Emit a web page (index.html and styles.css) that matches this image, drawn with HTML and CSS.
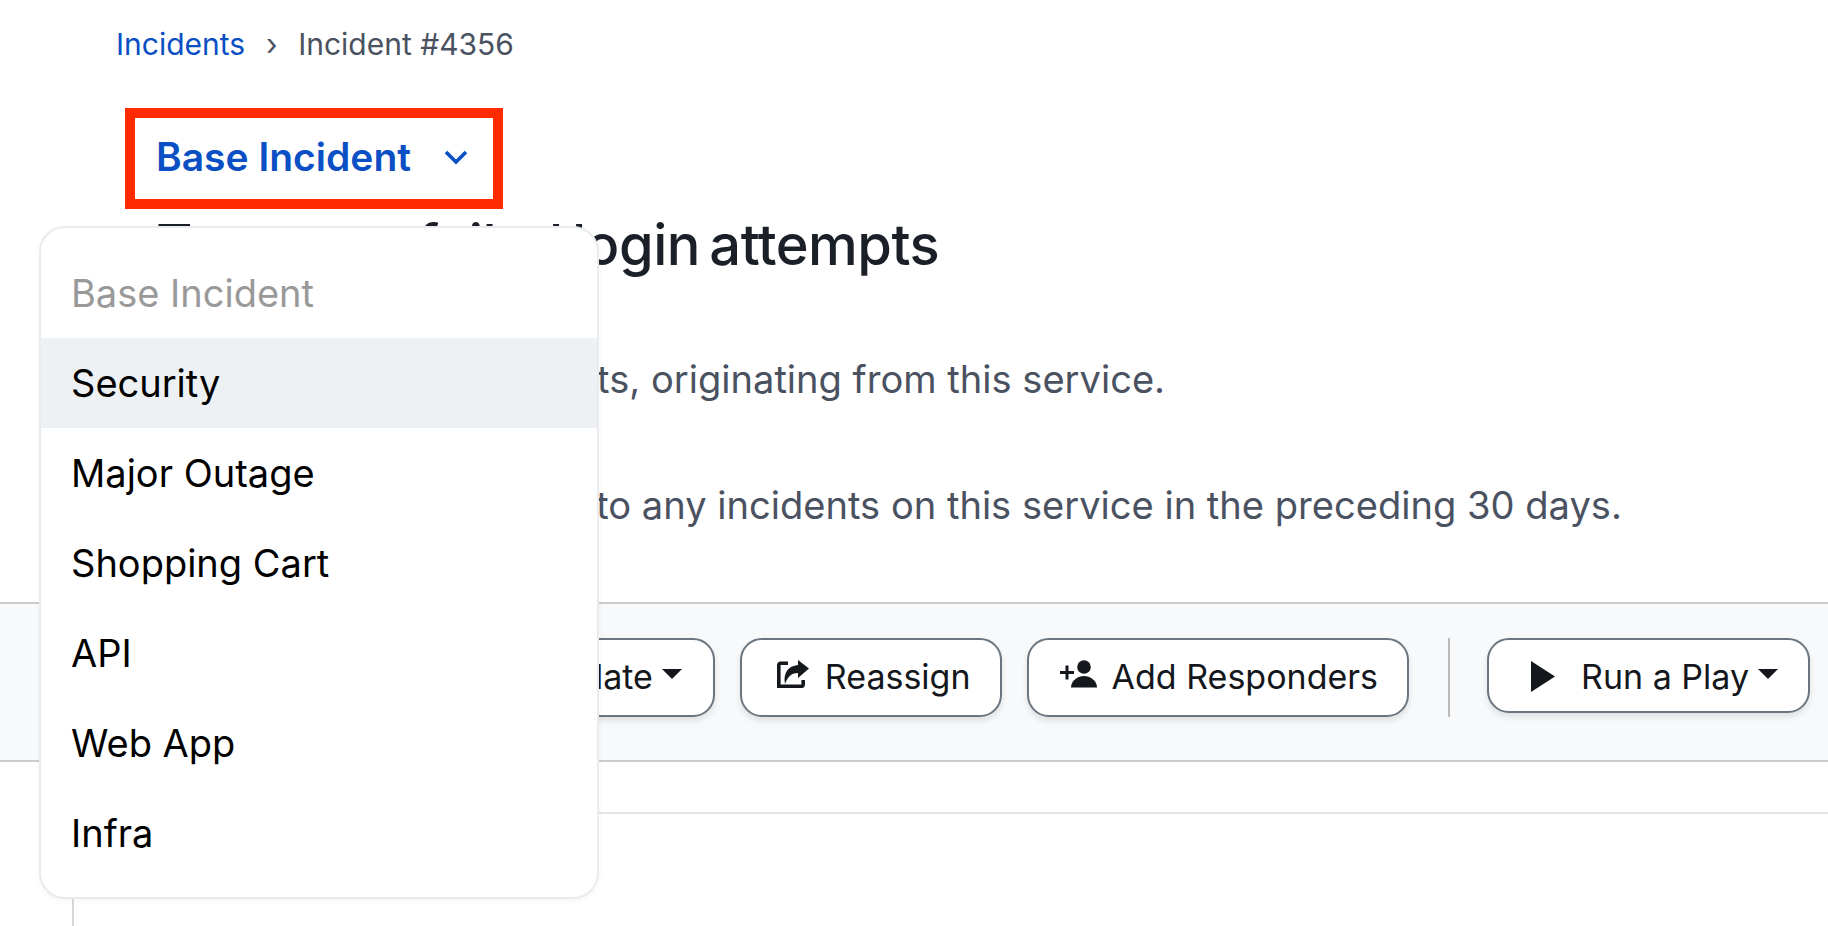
FILE: index.html
```html
<!DOCTYPE html>
<html lang="en">
<head>
    <meta charset="UTF-8">
    <title>Incident #4356</title>
    <link rel="stylesheet" href="styles.css">
</head>
<body>
<nav class="crumbs">
    <a href="#" class="crumb-link">Incidents</a>
    <span class="crumb-sep">›</span>
    <span>Incident #4356</span>
</nav>
<div class="type-box">
    <span class="type-name">Base Incident</span>
    <svg class="type-chevron" viewBox="0 0 24 16" width="24" height="16"><path d="M2 3l10 10L22 3" fill="none" stroke="#0a4fc4" stroke-width="3.6"/></svg>
</div>
<h1 class="title">Too many failed login attempts</h1>
<p class="desc desc-first">Many failed login attempts, originating from this service.</p>
<p class="desc desc-second">No recent changes sent to any incidents on this service in the preceding 30 days.</p>
<div class="toolbar">
    <button class="btn">Resolve</button>
    <button class="btn"><span class="label">Escalate<i class="caret"></i></span></button>
    <button class="btn btn-reassign">
        <svg class="btn-icon" viewBox="0 0 32 28" width="32" height="28"><path d="M11 3.200H3.500a1.700 1.700 0 0 0-1.700 1.700v21.400h22.700a1.700 1.700 0 0 0 1.700-1.700V20" fill="none" stroke="#14171c" stroke-width="3.600"/><path d="M21 0l11 8.500L21 18v-5c-6 0-10 3-13 11-2-11 3-18 13-19z" fill="#14171c"/></svg>
        Reassign
    </button>
    <button class="btn btn-add">
        <svg class="btn-icon" viewBox="0 0 38 28" width="38" height="28"><path d="M5.500 5.500h3v5.500H14v3H8.500v5.500h-3V14H0v-3h5.500z" fill="#14171c"/><circle cx="24" cy="7" r="6.800" fill="#14171c"/><path d="M11 27.500c0-7 7-11.500 13-11.500s13 4.500 13 11.500z" fill="#14171c"/></svg>
        Add Responders
    </button>
    <span class="toolbar-div"></span>
    <button class="btn btn-play">
        <svg viewBox="0 0 24 31" width="24" height="31"><path d="M0 0l24 15.500L0 31z" fill="#14171c"/></svg>
        <span class="label">Run a Play<i class="caret"></i></span>
    </button>
</div>
<div class="card"></div>
<ul class="menu">
    <li class="menu-head">Base Incident</li>
    <li class="menu-item active">Security</li>
    <li class="menu-item">Major Outage</li>
    <li class="menu-item">Shopping Cart</li>
    <li class="menu-item">API</li>
    <li class="menu-item">Web App</li>
    <li class="menu-item">Infra</li>
</ul>
</body>
</html>
```

FILE: styles.css
```css
*{margin: 0;padding: 0;box-sizing: border-box;list-style: none;}
html,body{height: 100%;}
body{display: flex;flex-direction: column;height: 926px;overflow: hidden;background: #fff;font-family: Inter, "Liberation Sans", sans-serif;color: #14171c;}

.crumbs{display: flex;align-items: center;height: 40px;margin: 24px 0 0 116px;font-size: 30px;color: #4a5261;}
.crumb-link{color: #0a4fc4;text-decoration: none;}
.crumb-sep{width: 53px;text-align: center;}

.type-box{display: flex;align-items: center;justify-content: space-between;width: 378px;height: 101px;margin: 44px 0 0 125px;padding: 0 25px 4px 21px;border: 10px solid #ff2a00;}
.type-name{font-size: 39px;font-weight: 600;color: #0a4fc4;}

.title{height: 70px;margin: 1px 0 0 156px;font-size: 56px;font-weight: 500;line-height: 70px;letter-spacing: -.5px;word-spacing: -5px;color: #1b2028;}

.desc{margin-left: 156px;font-size: 38.100px;line-height: 50px;color: #4a5261;white-space: nowrap;}
.desc-first{margin-top: 74px;}
.desc-second{margin-top: 76px;}

.toolbar{display: flex;align-items: flex-start;justify-content: flex-end;gap: 25px;height: 160px;margin-top: 72px;padding: 34px 18px 0 0;background: #f8f9fa;border-top: 2px solid #ccc;border-bottom: 2px solid #ccc;}
.btn{display: flex;align-items: center;justify-content: center;height: 79px;padding: 0 31px 2px;background: #fff;border: 2px solid #6b7580;border-radius: 22px;box-shadow: 0 4px 6px rgba(0,0,0,.1);font: 400 34px Inter, "Liberation Sans", sans-serif;color: #14171c;white-space: nowrap;}
.btn-reassign{gap: 16px;padding-left: 35px;padding-right: 29px;}
.btn-add{gap: 14px;padding-left: 31px;padding-right: 29px;}
.btn-icon{margin-bottom: 6px;}
.btn-play{height: 75px;gap: 26px;padding: 2px 30px 0 42px;}
.label{display: inline-flex;align-items: center;gap: 9px;}
.caret{border-top: 10px solid #14171c;border-left: 10px solid transparent;border-right: 10px solid transparent;transform: translateY(-3px);}
.toolbar-div{width: 2px;height: 79px;margin: 0 12px 0 14px;background: #bbb;}

.card{flex: 1;margin: 50px 0 0 72px;border-top: 2px solid #e5e5e5;border-left: 2px solid #d8d8d8;}

.menu{position: absolute;left: 39px;top: 226px;width: 560px;height: 673px;padding-top: 20px;background: #fff;border: 2px solid #e9ebee;border-radius: 26px;box-shadow: 0 2px 6px rgba(0,0,0,.04);}
.menu-head,.menu-item{height: 90px;padding-left: 30px;font-size: 38px;line-height: 90px;}
.menu-head{color: #999;}
.menu-item{color: #000;}
.menu-item.active{background: #edf1f4;}
```
